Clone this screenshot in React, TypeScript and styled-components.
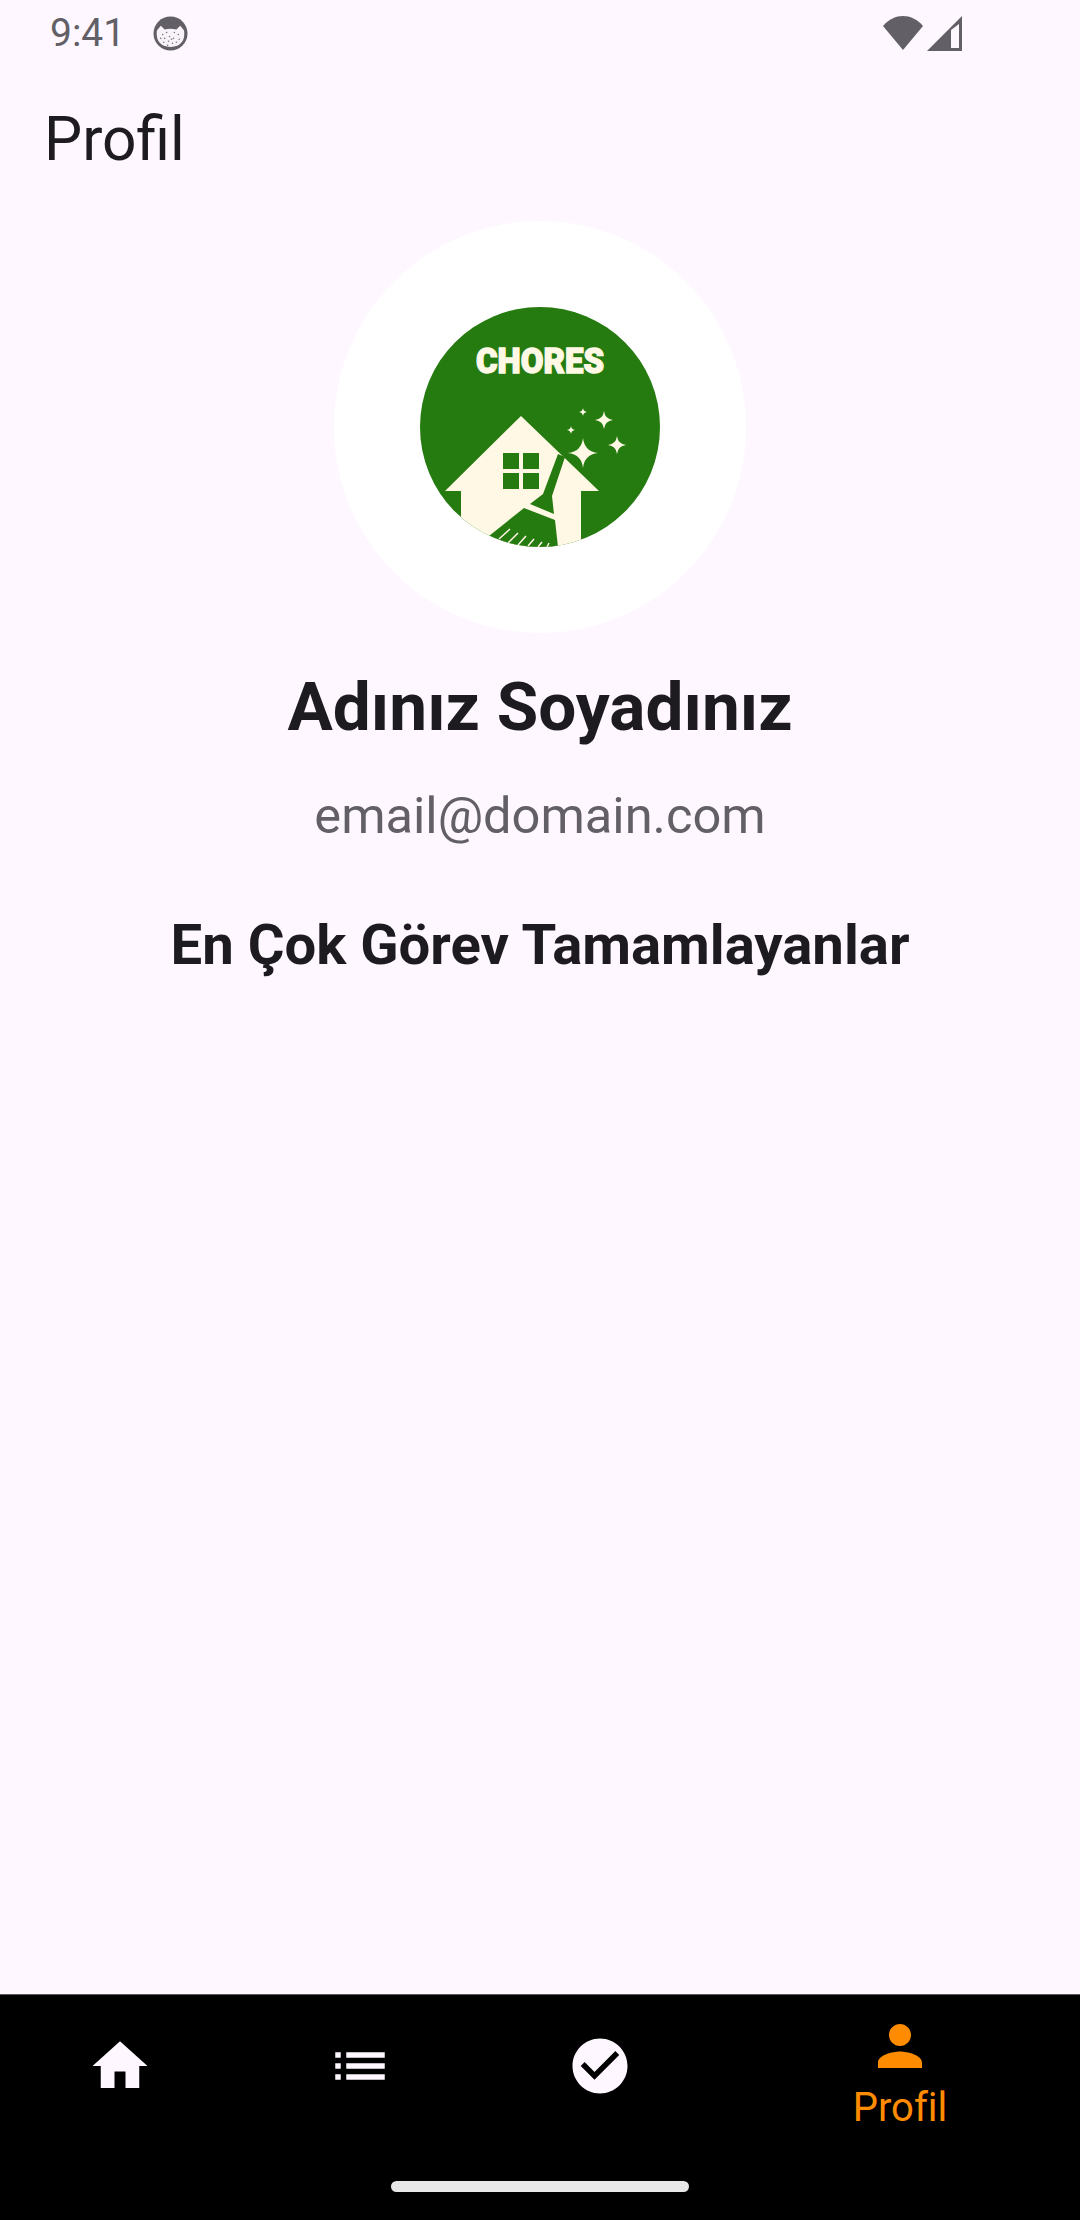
import React from "react";
import styled, { createGlobalStyle } from "styled-components";
import { MdHome, MdList, MdCheckCircle, MdPerson } from "react-icons/md";

const GlobalStyle = createGlobalStyle`
  html, body {
    margin: 0;
    padding: 0;
    background: #fef7ff;
    font-family: Roboto, "Liberation Sans", sans-serif;
  }
`;

const StatusIcons = () => (
  <StatusRight>
    <svg width="40" height="34" viewBox="0 0 40 34">
      <path d="M0 10 C6 3 13 0 20 0 C27 0 34 3 40 10 L20 34 Z" fill="#625f66" />
    </svg>
    <svg width="35" height="35" viewBox="0 0 35 35">
      <path fillRule="evenodd" d="M35 0 V35 H0 Z M32 8 L24 14 V32 H32 Z" fill="#625f66" />
    </svg>
  </StatusRight>
);

const specks = [
  [10, 19], [14, 17], [22, 17], [26, 19], [8, 23], [12, 23], [17, 21], [21, 23],
  [27, 24], [11, 27], [16, 26], [20, 28], [24, 27], [15, 30], [19, 24],
];

const DebugFace = () => (
  <svg width="35" height="35" viewBox="0 0 36 36">
    <circle cx="18" cy="18" r="17.5" fill="#625f66" />
    <path d="M4 15 L8 10 L12 14 Q18 12 24 14 L28 10 L32 15 Q34 31 18 32 Q2 31 4 15 Z" fill="#f8f3f9" />
    {specks.map(([cx, cy]) => (
      <circle key={`${cx}-${cy}`} cx={cx} cy={cy} r="0.8" fill="#77747b" />
    ))}
  </svg>
);

const Sparkle = ({ x, y, r }: { x: number; y: number; r: number }) => {
  const k = r * 0.1;
  return (
    <path
      d={`M${x} ${y - r} Q${x + k} ${y - k} ${x + r} ${y} Q${x + k} ${y + k} ${x} ${y + r} Q${x - k} ${y + k} ${x - r} ${y} Q${x - k} ${y - k} ${x} ${y - r} Z`}
      fill="#fff8e5"
    />
  );
};

const ChoresLogo = () => (
  <svg width="240" height="240" viewBox="0 0 240 240">
    <defs>
      <clipPath id="logoClip">
        <circle cx="120" cy="120" r="120" />
      </clipPath>
    </defs>
    <g clipPath="url(#logoClip)">
      <rect width="240" height="240" fill="#267b10" />
      <path d="M101 109 L179 184 H161 V240 H41 V184 H25 Z" fill="#fff8e5" />
      <rect x="83" y="146" width="16" height="16" fill="#267b10" />
      <rect x="103" y="146" width="16" height="16" fill="#267b10" />
      <rect x="83" y="166" width="16" height="16" fill="#267b10" />
      <rect x="103" y="166" width="16" height="16" fill="#267b10" />
      <path d="M138 147 L145 150 L132 189 L134 207 L110 197 L123 187 Z" fill="#267b10" />
      <path d="M104 201 L135 213 L138 240 H60 L69 229 Z" fill="#267b10" />
      <path
        d="M79 232 L90 222 M88 236 L98 226 M98 238 L106 229 M108 239 L114 232 M118 240 L122 235 M127 240 L129 236"
        stroke="#fff8e5"
        strokeWidth="1.5"
      />
      <Sparkle x={163} y={146} r={15} />
      <Sparkle x={184} y={113} r={9} />
      <Sparkle x={197} y={138} r={9} />
      <Sparkle x={163} y={105} r={4} />
      <Sparkle x={151} y={123} r={4} />
      <LogoText x="120" y="66" textAnchor="middle" textLength="128" lengthAdjust="spacingAndGlyphs">
        CHORES
      </LogoText>
    </g>
  </svg>
);

const tabs = [
  { key: "home", Icon: MdHome },
  { key: "list", Icon: MdList },
  { key: "done", Icon: MdCheckCircle },
];

export default function App() {
  return (
    <>
      <GlobalStyle />
      <Screen>
        <StatusBar>
          <StatusLeft>
            <Clock>9:41</Clock>
            <DebugFace />
          </StatusLeft>
          <StatusIcons />
        </StatusBar>
        <TopBar>
          <Title>Profil</Title>
        </TopBar>
        <Content>
          <Avatar>
            <ChoresLogo />
          </Avatar>
          <Name>Adınız Soyadınız</Name>
          <Email>email@domain.com</Email>
          <SectionTitle>En Çok Görev Tamamlayanlar</SectionTitle>
        </Content>
        <BottomNav>
          <Tabs>
            {tabs.map(({ key, Icon }) => (
              <Tab key={key}>
                <Icon size={66} color="#fef7ff" />
              </Tab>
            ))}
            <ActiveTab>
              <MdPerson size={66} color="#ff8c00" />
              <TabLabel>Profil</TabLabel>
            </ActiveTab>
          </Tabs>
          <HomeIndicator />
        </BottomNav>
      </Screen>
    </>
  );
}

const Screen = styled.div`
  width: 1080px;
  height: 2220px;
  display: flex;
  flex-direction: column;
  background: #fef7ff;
  overflow: hidden;
`;

const StatusBar = styled.div`
  height: 66px;
  flex-shrink: 0;
  display: flex;
  align-items: center;
  justify-content: space-between;
  padding: 0 118px 0 50px;
`;

const StatusLeft = styled.div`
  display: flex;
  align-items: center;
  gap: 28px;
`;

const Clock = styled.span`
  font-size: 39px;
  color: #625f66;
`;

const StatusRight = styled.div`
  display: flex;
  align-items: center;
  gap: 4px;
`;

const TopBar = styled.div`
  height: 155px;
  box-sizing: border-box;
  flex-shrink: 0;
  display: flex;
  align-items: center;
  padding: 0 0 8px 44px;
`;

const Title = styled.h1`
  margin: 0;
  font-size: 60.5px;
  font-weight: 400;
  color: #1d1b20;
`;

const Content = styled.div`
  flex: 1;
  display: flex;
  flex-direction: column;
  align-items: center;
`;

const Avatar = styled.div`
  width: 412px;
  height: 412px;
  border-radius: 50%;
  background: #ffffff;
  display: flex;
  align-items: center;
  justify-content: center;
`;

const LogoText = styled.text`
  font-family: Roboto, "Liberation Sans", sans-serif;
  font-size: 35px;
  font-weight: 900;
  fill: #fff8e5;
  stroke: #fff8e5;
  stroke-width: 1.4;
`;

const Name = styled.h2`
  margin: 35px 0 0;
  font-size: 67.5px;
  line-height: 78px;
  font-weight: 700;
  color: #1d1b20;
`;

const Email = styled.div`
  margin-top: 41px;
  font-size: 50.6px;
  line-height: 58px;
  color: #625f66;
`;

const SectionTitle = styled.h3`
  margin: 67px 0 0;
  font-size: 56.25px;
  line-height: 66px;
  font-weight: 700;
  color: #1d1b20;
`;

const BottomNav = styled.nav`
  height: 226px;
  flex-shrink: 0;
  box-sizing: border-box;
  background: #000000;
  border-top: 1px solid #5c5c5c;
  display: flex;
  flex-direction: column;
  align-items: center;
  position: relative;
`;

const Tabs = styled.div`
  width: 100%;
  display: flex;
`;

const Tab = styled.div`
  width: 240px;
  height: 142px;
  display: flex;
  align-items: center;
  justify-content: center;
`;

const ActiveTab = styled.div`
  width: 360px;
  display: flex;
  flex-direction: column;
  align-items: center;
  padding-top: 18px;
`;

const TabLabel = styled.span`
  margin-top: 7px;
  font-size: 40px;
  line-height: 44px;
  font-variant-ligatures: none;
  color: #ff8c00;
`;

const HomeIndicator = styled.div`
  position: absolute;
  left: 391px;
  bottom: 28px;
  width: 298px;
  height: 11px;
  border-radius: 6px;
  background: #e8e8e8;
`;
